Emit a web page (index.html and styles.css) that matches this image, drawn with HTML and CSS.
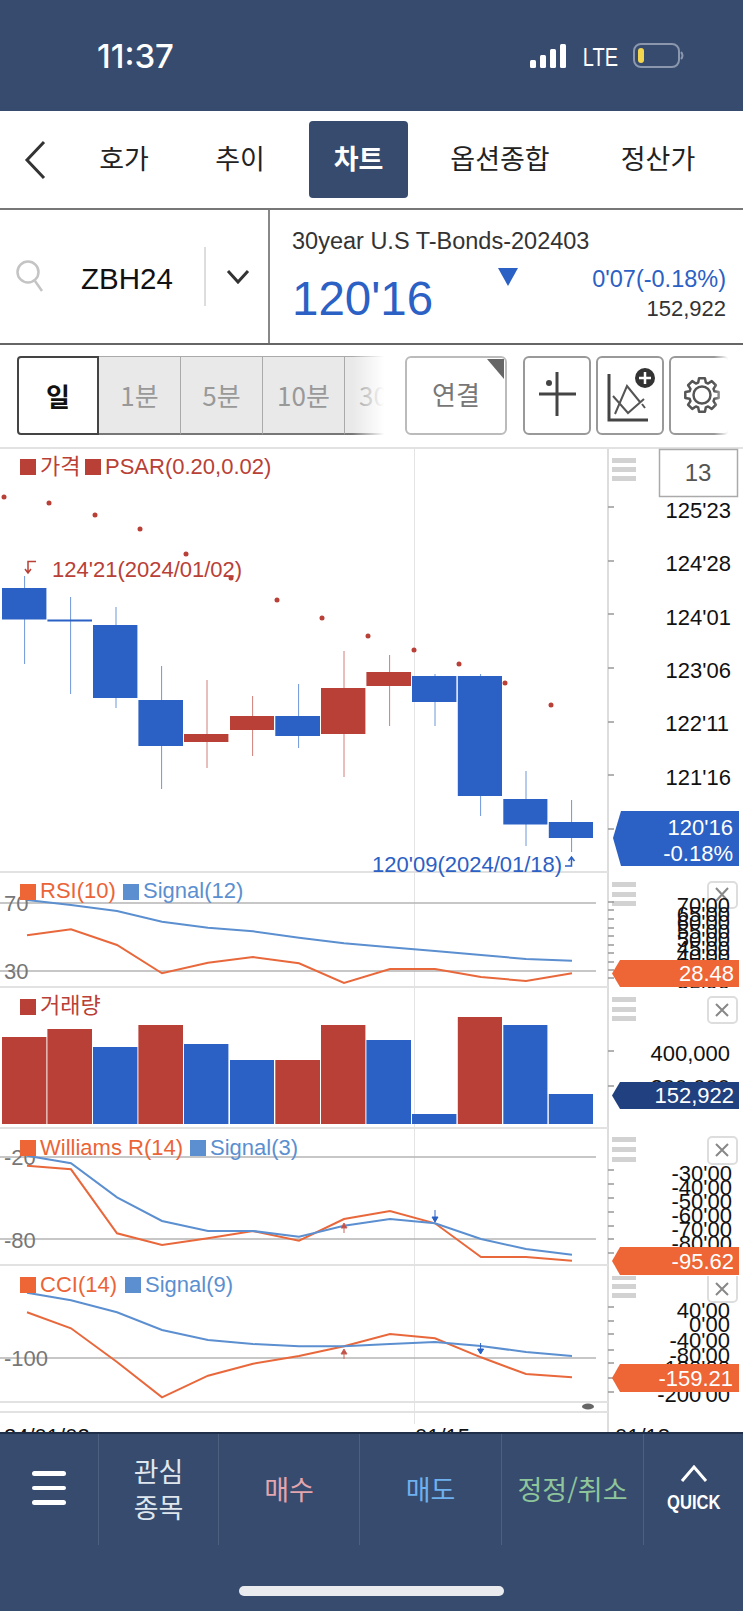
FILE: index.html
```html
<!DOCTYPE html>
<html lang="ko">
<head>
    <meta charset="UTF-8">
    <meta name="viewport" content="width=device-width, initial-scale=1.0">
    <title>차트</title>
    <link rel="stylesheet" href="styles.css">
</head>
<body>
    <div class="status-bar">
        <span class="time">11:37</span>
        <div class="status-icons">
            <svg width="36" height="24" viewBox="0 0 36 24">
                <rect x="0" y="16" width="6" height="8" rx="1.5"/>
                <rect x="10" y="11" width="6" height="13" rx="1.5"/>
                <rect x="20" y="5" width="6" height="19" rx="1.5"/>
                <rect x="30" y="0" width="6" height="24" rx="1.5"/>
            </svg>
            <span class="lte">LTE</span>
            <svg width="51" height="26" viewBox="0 0 51 26">
                <rect x="1" y="1" width="45" height="23" rx="7" class="batt"/>
                <rect x="5" y="5" width="6" height="15" rx="3" class="batt-level"/>
                <path d="M48 9 q3 3.5 0 7" class="batt"/>
            </svg>
        </div>
    </div>

    <nav class="tabs">
        <svg class="back" width="22" height="40" viewBox="0 0 22 40"><path d="M20 2 L3 20 L20 38"/></svg>
        <a class="tab tab-hoga">호가</a>
        <a class="tab tab-trend">추이</a>
        <a class="tab tab-chart">차트</a>
        <a class="tab tab-option">옵션종합</a>
        <a class="tab tab-settle">정산가</a>
    </nav>

    <section class="info">
        <div class="search">
            <svg class="search-icon" width="28" height="33" viewBox="0 0 28 33">
                <circle cx="12" cy="12" r="10.5"/>
                <path d="M19 21 L26 31"/>
            </svg>
            <span class="code">ZBH24</span>
            <span class="search-sep"></span>
            <svg class="drop" width="24" height="15" viewBox="0 0 24 15"><path d="M2 2 L12 13 L22 2"/></svg>
        </div>
        <div class="quote">
            <div class="quote-name">30year U.S T-Bonds-202403</div>
            <div class="quote-row">
                <span class="price">120'16</span>
                <span class="down-mark"></span>
                <div class="quote-right">
                    <div class="change">0'07(-0.18%)</div>
                    <div class="volume">152,922</div>
                </div>
            </div>
        </div>
    </section>

    <section class="toolbar">
        <div class="periods">
            <span class="period on">일</span>
            <span class="period">1분</span>
            <span class="period">5분</span>
            <span class="period">10분</span>
            <span class="period">30분</span>
        </div>
        <button class="link-btn">연결</button>
        <div class="tools">
            <span class="tool">
                <svg width="64" height="75" viewBox="525 359 64 75">
                    <path d="M539 395 H576 M557 373 V417" class="ic"/>
                    <circle cx="549" cy="384" r="3" fill="#444"/>
                </svg>
            </span>
            <span class="tool">
                <svg width="64" height="75" viewBox="598 359 64 75">
                    <path d="M609 375 V421 H648" class="ic"/>
                    <path d="M613 397 L628 414 L644 400 M615 415 L627 387 L640 403 M642 405 L645 409" class="ic-thin"/>
                    <circle cx="645" cy="379" r="10" fill="#333"/>
                    <path d="M639 379 H651 M645 373 V385" class="ic-plus"/>
                </svg>
            </span>
            <span class="tool">
                <svg width="57" height="75" viewBox="671 359 57 75">
                    <g transform="translate(702 396)">
                        <polygon class="ic-gear" points="-3.8,-12.4 -2.95,-16.7 2.95,-16.7 3.8,-12.4 6.1,-11.5 9.75,-13.9 13.9,-9.75 11.5,-6.1 12.4,-3.8 16.7,-2.95 16.7,2.95 12.4,3.8 11.5,6.1 13.9,9.75 9.75,13.9 6.1,11.5 3.8,12.4 2.95,16.7 -2.95,16.7 -3.8,12.4 -6.1,11.5 -9.75,13.9 -13.9,9.75 -11.5,6.1 -12.4,3.8 -16.7,2.95 -16.7,-2.95 -12.4,-3.8 -11.5,-6.1 -13.9,-9.75 -9.75,-13.9 -6.1,-11.5"/>
                        <circle class="ic-gear" r="8.5"/>
                    </g>
                </svg>
            </span>
        </div>
    </section>

    <main class="chart">
        <!-- price -->
        <svg class="pane pane-open" width="743" height="426" viewBox="0 447 743 426">
            <rect x="0" y="447" width="743" height="2" class="sep"/>
            <rect x="0" y="871" width="608" height="2" class="sep"/>
            <rect x="20" y="459" width="16" height="16" class="f-red"/>
            <text x="40" y="474" class="t c-red">가격</text>
            <rect x="85" y="459" width="16" height="16" class="f-red"/>
            <text x="105" y="474" class="t c-red">PSAR(0.20,0.02)</text>

            <g class="f-dot">
                <circle cx="4" cy="497" r="2.5"/><circle cx="49" cy="503" r="2.5"/>
                <circle cx="95" cy="515" r="2.5"/><circle cx="140" cy="529" r="2.5"/>
                <circle cx="186" cy="554" r="2.5"/><circle cx="231" cy="578" r="2.5"/>
                <circle cx="277" cy="600" r="2.5"/><circle cx="322" cy="618" r="2.5"/>
                <circle cx="368" cy="636" r="2.5"/><circle cx="414" cy="650" r="2.5"/>
                <circle cx="459" cy="664" r="2.5"/><circle cx="505" cy="683" r="2.5"/>
                <circle cx="551" cy="705" r="2.5"/>
            </g>

            <g class="wick-b">
                <path d="M24.6 576 V664 M70.6 597 V694 M116 607 V708 M161.6 666 V789 M298.6 684 V748 M435 674 V726 M480.6 674 V816 M526 771 V846 M571.6 800 V852"/>
            </g>
            <g class="wick-r">
                <path d="M207 680 V768 M252.6 696 V756 M344 651 V777 M389.6 655 V726"/>
            </g>
            <g class="f-blue">
                <rect x="2" y="588" width="44.4" height="31.5"/>
                <rect x="47.4" y="619.5" width="44.6" height="2"/>
                <rect x="93" y="625" width="44.4" height="73"/>
                <rect x="138.4" y="700" width="44.6" height="46"/>
                <rect x="275.3" y="716" width="44.7" height="20"/>
                <rect x="412" y="676" width="44.4" height="26"/>
                <rect x="457.8" y="676" width="44.2" height="120"/>
                <rect x="503.3" y="799" width="44.1" height="25.5"/>
                <rect x="548.8" y="822" width="44.2" height="16"/>
            </g>
            <g class="f-red">
                <rect x="184" y="734" width="44.4" height="8"/>
                <rect x="230" y="716" width="44" height="14"/>
                <rect x="321" y="688" width="44.4" height="46"/>
                <rect x="366.4" y="672" width="44.6" height="14"/>
            </g>

            <path d="M36 561.5 H28 V572 M25 569 L28 573 L31 569" class="arrow-r"/>
            <text x="52" y="577" class="t c-red">124'21(2024/01/02)</text>
            <text x="372" y="872" class="t c-blue">120'09(2024/01/18)</text>
            <path d="M565 866 H571.5 V858 M568.5 861 L571.5 857 L574.5 861" class="arrow-b"/>

            <g class="handle">
                <rect x="612" y="458" width="24" height="5"/><rect x="612" y="467" width="24" height="5"/><rect x="612" y="476" width="24" height="5"/>
            </g>
            <rect x="659.5" y="449.5" width="78" height="47" class="box"/>
            <text x="698" y="481" class="t c-gray13">13</text>

            <path d="M608 507 h6 M608 561 h6 M608 614 h6 M608 668 h6 M608 722 h6 M608 775 h6 M608 829 h6" class="tick"/>
            <text x="731" y="518" class="t end">125'23</text>
            <text x="731" y="571" class="t end">124'28</text>
            <text x="731" y="625" class="t end">124'01</text>
            <text x="731" y="678" class="t end">123'06</text>
            <text x="729" y="731" class="t end">122'11</text>
            <text x="731" y="785" class="t end">121'16</text>
            <polygon points="621,811 739,811 739,866 621,866 613,838" class="f-blue"/>
            <text x="733" y="835" class="t end c-white">120'16</text>
            <text x="733" y="861" class="t end c-white">-0.18%</text>
        </svg>

        <!-- rsi -->
        <svg class="pane" width="743" height="115" viewBox="0 873 743 115">
            <rect x="0" y="986" width="608" height="2" class="sep"/>
            <path d="M0 903 H596 M0 971 H596" class="guide"/>
            <text x="4" y="911" class="t c-guide">70</text>
            <text x="4" y="979" class="t c-guide">30</text>
            <polyline class="l-sig" points="27,900 71,905 117,911 162,921.7 208,927.7 253,931.3 299,937.7 344,943.3 390,947.3 435,951 481,955 526,959 572,960.7"/>
            <polyline class="l-org" points="27,935.3 71,929.3 117,945 162,973.3 208,962.7 253,957 299,963.3 344,983 390,969 435,969 481,977 526,981 572,973.3"/>
            <rect x="20" y="884" width="16" height="16" class="f-org"/>
            <text x="40" y="898" class="t c-org">RSI(10)</text>
            <rect x="123" y="884" width="16" height="16" class="f-sig"/>
            <text x="143" y="898" class="t c-sig">Signal(12)</text>

            <g class="handle">
                <rect x="612" y="882" width="24" height="5"/><rect x="612" y="892" width="24" height="5"/><rect x="612" y="901" width="24" height="5"/>
            </g>
            <rect x="708" y="882" width="29" height="26" rx="4" class="close"/>
            <path d="M716 888 L728 901 M728 888 L716 901" class="close-x"/>
            <path d="M608 902 h6 M608 910 h6 M608 919 h6 M608 928 h6 M608 936 h6 M608 945 h6 M608 953 h6 M608 962 h6 M608 970 h6 M608 978 h6" class="tick"/>
            <text x="730" y="913" class="t end">70'00</text>
            <text x="730" y="921.5" class="t end">65'00</text>
            <text x="730" y="930" class="t end">60'00</text>
            <text x="730" y="938.5" class="t end">55'00</text>
            <text x="730" y="947" class="t end">50'00</text>
            <text x="730" y="955.5" class="t end">45'00</text>
            <text x="730" y="964" class="t end">40'00</text>
            <text x="730" y="972.5" class="t end">35'00</text>
            <text x="730" y="1001" class="t end">25'00</text>
            <polygon points="620,960 739,960 739,987 620,987 612,973.5" class="f-org"/>
            <text x="734" y="981" class="t end c-white">28.48</text>
        </svg>

        <!-- volume -->
        <svg class="pane" width="743" height="141" viewBox="0 988 743 141">
            <rect x="0" y="1127" width="608" height="2" class="sep"/>
            <rect x="20" y="999" width="16" height="16" class="f-red"/>
            <text x="40" y="1013" class="t c-red">거래량</text>
            <g class="f-red">
                <rect x="2" y="1037" width="44.4" height="87"/>
                <rect x="47.4" y="1029" width="44.6" height="95"/>
                <rect x="138.4" y="1025" width="44.6" height="99"/>
                <rect x="275.3" y="1060" width="44.7" height="64"/>
                <rect x="321" y="1025" width="44.4" height="99"/>
                <rect x="457.8" y="1017" width="44.2" height="107"/>
            </g>
            <g class="f-blue">
                <rect x="93" y="1047" width="44.4" height="77"/>
                <rect x="184" y="1044" width="44.4" height="80"/>
                <rect x="230" y="1060" width="44" height="64"/>
                <rect x="366.4" y="1040" width="44.6" height="84"/>
                <rect x="412" y="1114" width="44.4" height="10"/>
                <rect x="503.3" y="1025" width="44.1" height="99"/>
                <rect x="548.8" y="1094" width="44.2" height="30"/>
            </g>
            <g class="handle">
                <rect x="612" y="997" width="24" height="5"/><rect x="612" y="1007" width="24" height="5"/><rect x="612" y="1016" width="24" height="5"/>
            </g>
            <rect x="708" y="997" width="29" height="26" rx="4" class="close"/>
            <path d="M716 1004 L728 1016 M728 1004 L716 1016" class="close-x"/>
            <path d="M608 1051 h6 M608 1086 h6" class="tick"/>
            <text x="730" y="1061" class="t end">400,000</text>
            <text x="730" y="1095" class="t end">200,000</text>
            <polygon points="620,1082 739,1082 739,1109 620,1109 612,1095.5" class="f-navy"/>
            <text x="734" y="1103" class="t end c-white">152,922</text>
        </svg>

        <!-- williams r -->
        <svg class="pane" width="743" height="147" viewBox="0 1129 743 147">
            <rect x="0" y="1264" width="608" height="2" class="sep"/>
            <path d="M0 1157 H596 M0 1239 H596" class="guide"/>
            <text x="4" y="1165" class="t c-guide">-20</text>
            <text x="4" y="1248" class="t c-guide">-80</text>
            <polyline class="l-org" points="27,1165.7 71,1169.3 117,1233.3 162,1245 208,1238.3 253,1231 299,1240.7 344,1219 390,1211 435,1223.3 481,1257 526,1257 572,1260.7"/>
            <polyline class="l-sig" points="27,1155.7 71,1163.3 117,1197.3 162,1221 208,1231 253,1231 299,1236.7 344,1225.7 390,1219 435,1223.3 481,1239 526,1249 572,1254.7"/>
            <path d="M344 1233 V1224 M341 1228 L344 1223 L347 1228 Z" class="sig-up"/>
            <path d="M435 1210 V1221 M432 1217 L435 1222 L438 1217 Z" class="sig-dn"/>
            <rect x="20" y="1140" width="16" height="16" class="f-org"/>
            <text x="40" y="1155" class="t c-org">Williams R(14)</text>
            <rect x="190" y="1140" width="16" height="16" class="f-sig"/>
            <text x="210" y="1155" class="t c-sig">Signal(3)</text>

            <g class="handle">
                <rect x="612" y="1137" width="24" height="5"/><rect x="612" y="1147" width="24" height="5"/><rect x="612" y="1157" width="24" height="5"/>
            </g>
            <rect x="708" y="1137" width="29" height="27" rx="4" class="close"/>
            <path d="M716 1144 L728 1156 M728 1144 L716 1156" class="close-x"/>
            <path d="M608 1170 h6 M608 1184 h6 M608 1198 h6 M608 1212 h6 M608 1226 h6 M608 1239 h6 M608 1253 h6" class="tick"/>
            <text x="732" y="1181" class="t end">-30'00</text>
            <text x="732" y="1195" class="t end">-40'00</text>
            <text x="732" y="1209" class="t end">-50'00</text>
            <text x="732" y="1223" class="t end">-60'00</text>
            <text x="732" y="1237" class="t end">-70'00</text>
            <text x="732" y="1251" class="t end">-80'00</text>
            <polygon points="620,1247 739,1247 739,1275 620,1275 612,1261" class="f-org"/>
            <text x="734" y="1269" class="t end c-white">-95.62</text>
        </svg>

        <!-- cci -->
        <svg class="pane" width="743" height="156" viewBox="0 1276 743 156">
            <path d="M0 1358 H596" class="guide"/>
            <text x="4" y="1366" class="t c-guide">-100</text>
            <polyline class="l-org" points="27,1312.3 71,1328.3 117,1362 162,1397.3 208,1375.7 253,1363.7 299,1356 344,1346.3 390,1334 435,1338.3 481,1357.3 526,1374 572,1377.3"/>
            <polyline class="l-sig" points="27,1292.7 71,1300.3 117,1312.3 162,1330 208,1340 253,1344 299,1346.3 344,1346.3 390,1344 435,1342 481,1346 526,1352 572,1356"/>
            <path d="M344 1359 V1350 M341 1354 L344 1349 L347 1354 Z" class="sig-up"/>
            <path d="M480.6 1343 V1353 M477.6 1349 L480.6 1354 L483.6 1349 Z" class="sig-dn"/>
            <rect x="20" y="1277" width="16" height="16" class="f-org"/>
            <text x="40" y="1292" class="t c-org">CCI(14)</text>
            <rect x="125" y="1277" width="16" height="16" class="f-sig"/>
            <text x="145" y="1292" class="t c-sig">Signal(9)</text>
            <rect x="0" y="1401" width="608" height="2" class="sep"/>
            <rect x="0" y="1411" width="608" height="2" class="sep"/>
            <ellipse cx="588" cy="1406.5" rx="6" ry="3" fill="#666"/>
            <text x="4" y="1444" class="t">24/01/02</text>
            <text x="415" y="1444" class="t">01/15</text>
            <text x="615" y="1444" class="t">01/18</text>

            <g class="handle">
                <rect x="612" y="1276" width="24" height="4"/><rect x="612" y="1284" width="24" height="5"/><rect x="612" y="1293" width="24" height="5"/>
            </g>
            <rect x="708" y="1270" width="29" height="32" rx="4" class="close"/>
            <path d="M716 1283 L728 1295 M728 1283 L716 1295" class="close-x"/>
            <path d="M608 1307 h6 M608 1321 h6 M608 1334 h6 M608 1350 h6 M608 1363 h6 M608 1378 h6 M608 1392 h6" class="tick"/>
            <text x="730" y="1318" class="t end">40'00</text>
            <text x="730" y="1332" class="t end">0'00</text>
            <text x="730" y="1348" class="t end">-40'00</text>
            <text x="730" y="1363" class="t end">-80'00</text>
            <text x="730" y="1376" class="t end">-120'00</text>
            <text x="730" y="1402" class="t end">-200'00</text>
            <polygon points="620,1364 739,1364 739,1392 620,1392 612,1378" class="f-org"/>
            <text x="733" y="1386" class="t end c-white">-159.21</text>
        </svg>
    </main>

    <footer class="bottom">
        <div class="menu">
            <div class="menu-item menu-ham"><span></span><span></span><span></span></div>
            <div class="menu-item menu-fav">관심<br>종목</div>
            <div class="menu-item menu-buy">매수</div>
            <div class="menu-item menu-sell">매도</div>
            <div class="menu-item menu-edit">정정/취소</div>
            <div class="menu-item menu-quick">
                <svg width="28" height="18" viewBox="0 0 28 18"><path d="M2 16 L14 2 L26 16"/></svg>
                <span class="quick-label">QUICK</span>
            </div>
        </div>
        <div class="home-bar"></div>
    </footer>
</body>
</html>
```

FILE: styles.css
```css
* {
    box-sizing: border-box;
}

body {
    margin: 0;
    width: 743px;
    height: 1611px;
    overflow: hidden;
    background: #fff;
    font-family: "Liberation Sans", "Noto Sans CJK KR", sans-serif;
    color: #222;
}

/* status bar */
.status-bar {
    height: 111px;
    background: #364b6e;
    display: flex;
    align-items: center;
    justify-content: space-between;
    padding: 0 59px 0 97px;
}

.time {
    font-family: Inter, "Liberation Sans", sans-serif;
    font-size: 33px;
    font-weight: 500;
    color: #fff;
}

.status-icons {
    display: flex;
    align-items: center;
}

.status-icons svg {
    fill: #fff;
}

.lte {
    display: inline-block;
    font-size: 25px;
    color: #fff;
    margin: 3px 15px 0 8px;
    transform: scaleX(0.8);
    transform-origin: right center;
}

.batt {
    fill: none;
    stroke: #8a97ad;
    stroke-width: 2;
}

.status-icons .batt-level {
    fill: #f3d54e;
}

/* tabs */
.tabs {
    height: 99px;
    display: flex;
    align-items: flex-start;
    border-bottom: 2px solid #777;
    font-family: "Noto Sans CJK KR", "Liberation Sans", sans-serif;
}

.back {
    margin: 29px 22px 0 24px;
    flex: none;
}

.back path {
    fill: none;
    stroke: #333;
    stroke-width: 3;
}

.tab {
    font-size: 27px;
    line-height: 73px;
    margin-top: 10px;
    height: 77px;
    text-align: center;
    color: #222;
    flex: none;
}

.tab-hoga { width: 112px; margin-left: 0; }
.tab-trend { width: 120px; }
.tab-chart {
    width: 99px;
    margin-left: 9px;
    background: #364b6e;
    color: #fff;
    font-weight: 700;
    border-radius: 4px;
}
.tab-option { width: 184px; }
.tab-settle { width: 132px; }

/* code + quote */
.info {
    height: 135px;
    display: flex;
    border-bottom: 2px solid #666;
}

.search {
    width: 270px;
    flex: none;
    display: flex;
    align-items: center;
    border-right: 2px solid #888;
    padding-left: 16px;
}

.search-icon {
    flex: none;
}

.search-icon circle, .search-icon path {
    fill: none;
    stroke: #c4c4c4;
    stroke-width: 2.5;
}

.code {
    font-size: 29.5px;
    margin: 4px 0 0 37px;
    width: 123px;
    color: #111;
}

.search-sep {
    width: 2px;
    height: 59px;
    background: #ddd;
    flex: none;
}

.drop {
    margin-left: 20px;
}

.drop path {
    fill: none;
    stroke: #333;
    stroke-width: 3;
}

.quote {
    flex: 1;
    padding: 18px 17px 0 22px;
}

.quote-name {
    font-size: 23.5px;
    line-height: 26px;
    color: #333;
}

.quote-row {
    display: flex;
    margin-top: 12px;
}

.price {
    font-size: 47.5px;
    line-height: 54px;
    margin-top: 6px;
    color: #2b60c4;
}

.down-mark {
    width: 0;
    height: 0;
    margin: 2px 0 0 65px;
    border-left: 10px solid transparent;
    border-right: 10px solid transparent;
    border-top: 18px solid #2b60c4;
}

.quote-right {
    margin-left: auto;
    text-align: right;
}

.change {
    font-size: 23.5px;
    line-height: 26px;
    color: #2b60c4;
}

.volume {
    font-size: 22px;
    line-height: 26px;
    margin-top: 4px;
    color: #333;
}

/* toolbar */
.toolbar {
    height: 102px;
    display: flex;
    padding: 11px 0 0 17px;
    font-family: "Noto Sans CJK KR", "Liberation Sans", sans-serif;
}

.periods {
    width: 371px;
    height: 79px;
    display: flex;
    overflow: hidden;
    position: relative;
    flex: none;
}

.periods::after {
    content: "";
    position: absolute;
    top: 0;
    right: 0;
    bottom: 0;
    width: 36px;
    background: linear-gradient(90deg, rgba(255, 255, 255, 0), #fff 90%);
}

.period {
    width: 82px;
    flex: none;
    text-align: center;
    line-height: 75px;
    font-size: 26px;
    color: #999;
    background: #e9e9e9;
    border: 1px solid #aaa;
    border-left: none;
    border-bottom: 2px solid #777;
}

.period.on {
    background: #fff;
    color: #111;
    font-weight: 700;
    border: 2px solid #444;
    border-radius: 4px 0 0 4px;
}

.link-btn {
    width: 102px;
    height: 79px;
    margin-left: 17px;
    padding: 0 0 4px;
    position: relative;
    background: #fff;
    border: 2px solid #bbb;
    border-radius: 6px;
    font: 26px "Noto Sans CJK KR", sans-serif;
    color: #777;
    flex: none;
}

.link-btn::after {
    content: "";
    position: absolute;
    top: 1px;
    right: 1px;
    border-top: 20px solid #666;
    border-left: 17px solid transparent;
}

.tools {
    display: flex;
    gap: 5px;
    margin-left: 16px;
    position: relative;
}

.tools::after {
    content: "";
    position: absolute;
    top: 0;
    right: 0;
    height: 79px;
    width: 16px;
    background: linear-gradient(90deg, rgba(255, 255, 255, 0), #fff 90%);
}

.tool {
    height: 79px;
    border: 2px solid #999;
    border-radius: 6px;
    display: block;
    overflow: hidden;
}

.tool svg {
    display: block;
}

.ic {
    fill: none;
    stroke: #444;
    stroke-width: 3;
}

.ic-thin {
    fill: none;
    stroke: #555;
    stroke-width: 2;
}

.ic-plus {
    fill: none;
    stroke: #fff;
    stroke-width: 2.5;
}

.ic-gear {
    fill: none;
    stroke: #555;
    stroke-width: 2.5;
    stroke-linejoin: round;
}

/* chart panes */
.chart {
    position: relative;
    height: 985px;
    isolation: isolate;
}

.chart::before {
    content: "";
    position: absolute;
    left: 414px;
    top: 1px;
    bottom: 8px;
    width: 1px;
    background: #e4e4e4;
    z-index: -1;
}

.chart::after {
    content: "";
    position: absolute;
    left: 607px;
    top: 1px;
    bottom: 0;
    width: 2px;
    background: #ddd;
    z-index: -1;
}

.pane {
    display: block;
}

.pane-open {
    overflow: visible;
}

.t {
    font-family: "Liberation Sans", "Noto Sans CJK KR", sans-serif;
    font-size: 22px;
    fill: #111;
}

.end { text-anchor: end; }
.c-red { fill: #b94036; }
.c-org { fill: #eb6437; }
.c-sig { fill: #5b8fd0; }
.c-blue { fill: #2b60c4; }
.c-white { fill: #fff; }
.c-guide { fill: #777; }
.c-gray13 { fill: #555; font-size: 24px; text-anchor: middle; }

.f-red { fill: #b94036; }
.f-blue { fill: #2b60c4; }
.f-org { fill: #ee6536; }
.f-sig { fill: #5b8fd0; }
.f-navy { fill: #20407f; }
.f-dot { fill: #b94036; }

.sep { fill: #e2e2e2; }
.guide { fill: none; stroke: #b5b5b5; stroke-width: 1.5; }
.tick { fill: none; stroke: #999; stroke-width: 1.5; }
.handle { fill: #d2d2d2; }
.box { fill: #fff; stroke: #aaa; stroke-width: 1.5; }
.close { fill: #fff; stroke: #ddd; stroke-width: 2; }
.close-x { fill: none; stroke: #888; stroke-width: 2; }

.wick-b { fill: none; stroke: #6f97d8; stroke-width: 1; }
.wick-r { fill: none; stroke: #cf7f78; stroke-width: 1; }
.arrow-r { fill: none; stroke: #b94036; stroke-width: 1.5; }
.arrow-b { fill: none; stroke: #2b60c4; stroke-width: 1.5; }

.l-org { fill: none; stroke: #e8683c; stroke-width: 2; }
.l-sig { fill: none; stroke: #5b8fd0; stroke-width: 2; }
.sig-up { fill: #b94036; stroke: #c9665e; stroke-width: 1; }
.sig-dn { fill: #2b60c4; stroke: #2b60c4; stroke-width: 1; }

/* bottom menu */
.bottom {
    height: 179px;
    background: #364b6e;
    border-top: 2px solid #1f2f4a;
    position: relative;
    font-family: "Noto Sans CJK KR", "Liberation Sans", sans-serif;
}

.menu {
    display: flex;
    height: 111px;
}

.menu-item {
    display: flex;
    flex-direction: column;
    align-items: center;
    justify-content: center;
    border-right: 1px solid #4d6080;
    font-size: 27px;
    text-align: center;
    flex: none;
    padding-bottom: 2px;
}

.menu-ham { width: 99px; gap: 10px; padding: 0 0 3px; }
.menu-ham span {
    display: block;
    width: 34px;
    height: 4.5px;
    border-radius: 3px;
    background: #fff;
    margin-left: -1px;
}

.menu-fav { width: 120px; display: block; padding-top: 19px; line-height: 36px; color: #dfe6ee; }
.menu-buy { width: 141px; color: #e3a5ae; }
.menu-sell { width: 142px; color: #6fb0ee; }
.menu-edit { width: 142px; color: #8ec59a; }

.menu-quick {
    width: 99px;
    border-right: none;
    color: #fff;
    font-family: "Liberation Sans", sans-serif;
    font-size: 21px;
    font-weight: 700;
    line-height: 24px;
    gap: 7px;
    padding: 0 0 0 1px;
}

.quick-label {
    display: block;
    transform: scaleX(0.79);
}

.menu-quick path {
    fill: none;
    stroke: #fff;
    stroke-width: 3;
}

.home-bar {
    width: 265px;
    height: 10px;
    margin: 41px auto 0 239px;
    border-radius: 5px;
    background: #e9ebef;
}
```
